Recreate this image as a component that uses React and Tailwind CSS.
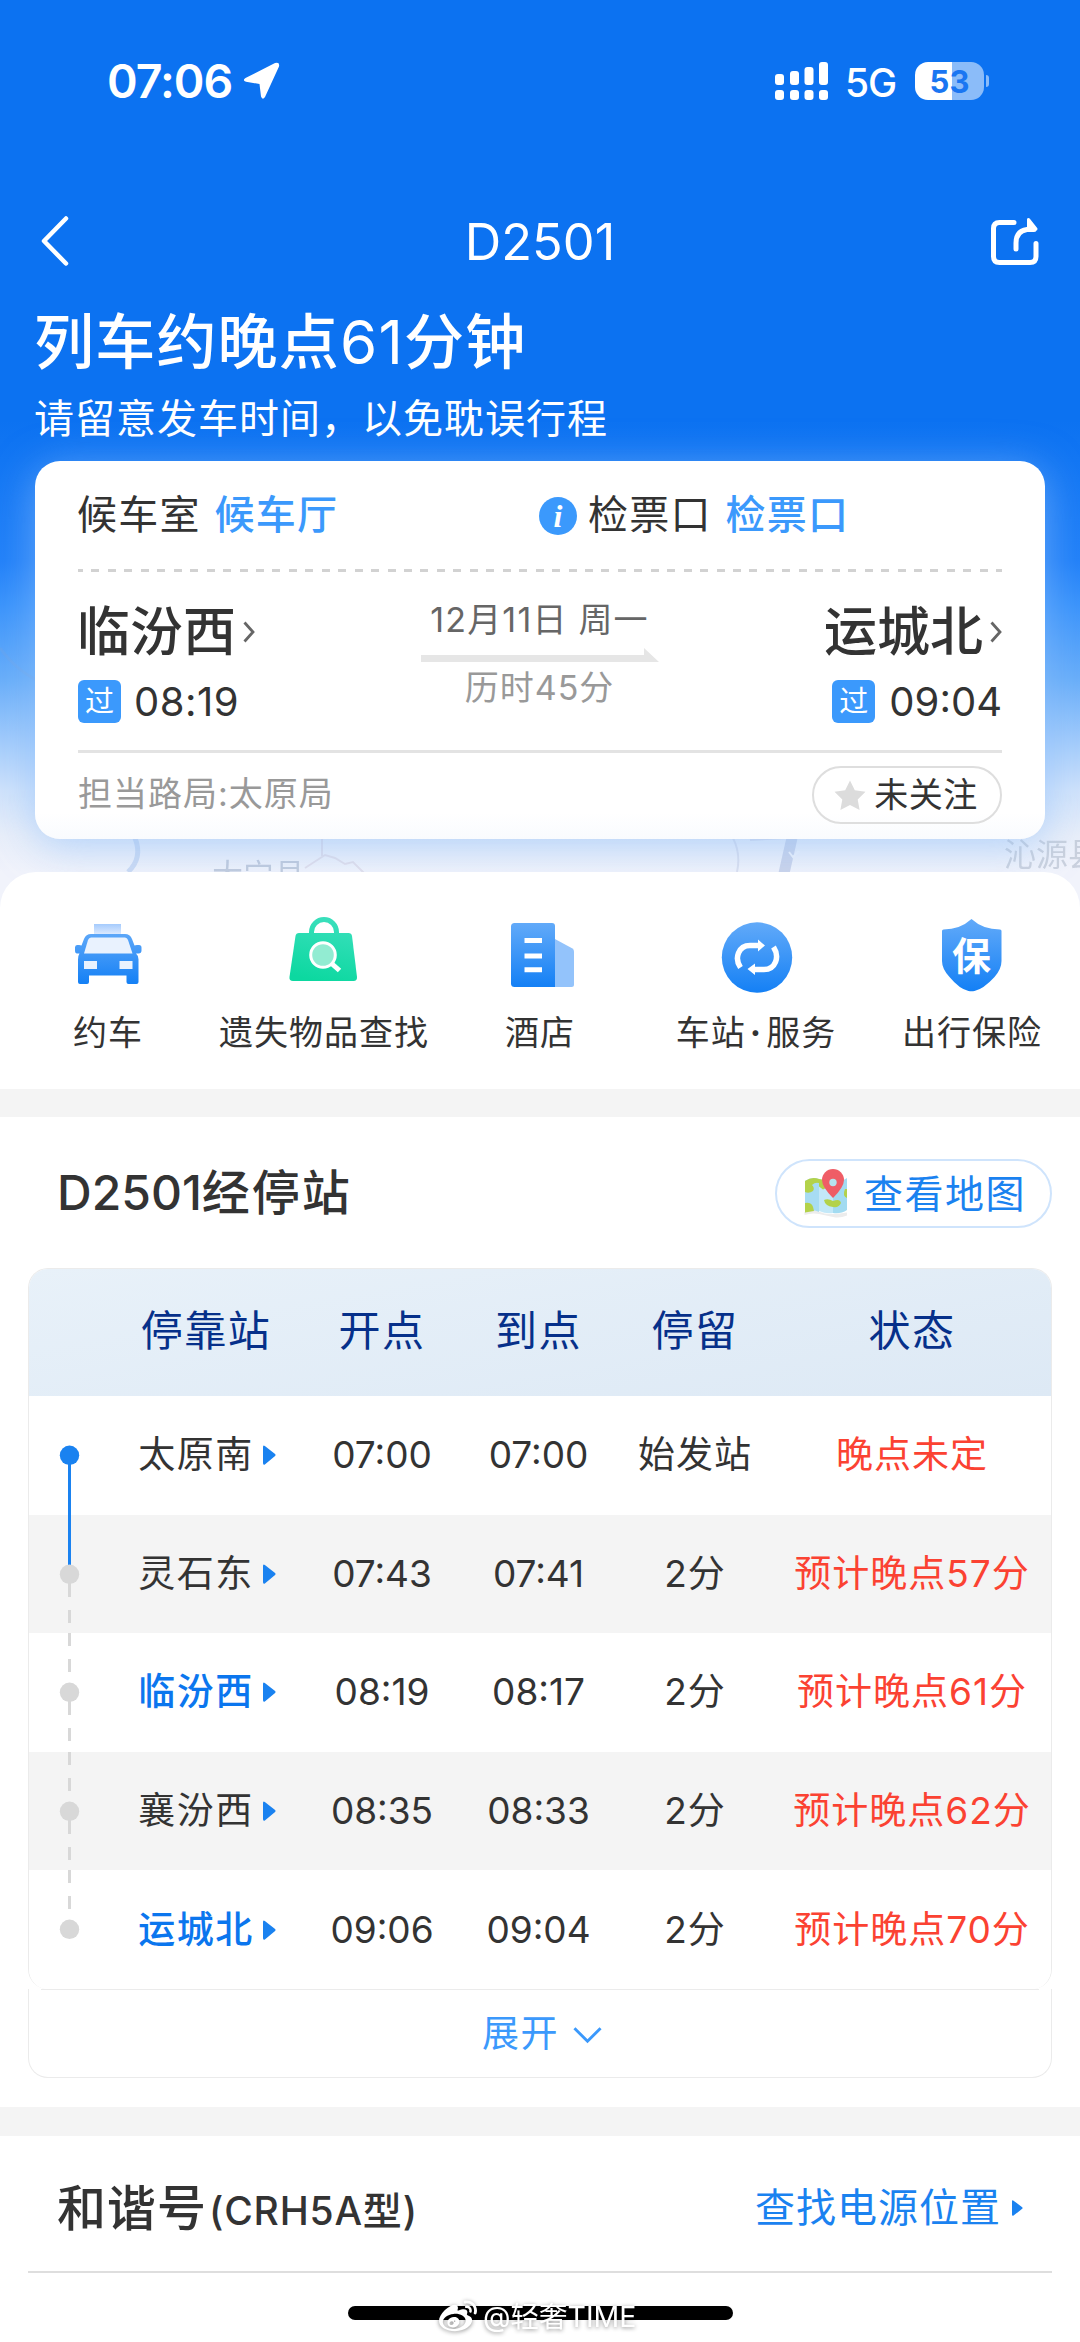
import React from "react";
import { FaWeibo } from "react-icons/fa";

const SERVICES = [
  { label: "约车", icon: CarIcon },
  { label: "遗失物品查找", icon: BagIcon },
  { label: "酒店", icon: HotelIcon },
  { label: "车站·服务", icon: StationIcon },
  { label: "出行保险", icon: ShieldIcon },
];

const STOPS = [
  { name: "太原南", depart: "07:00", arrive: "07:00", stay: "始发站", status: "晚点未定", passed: true },
  { name: "灵石东", depart: "07:43", arrive: "07:41", stay: "2分", status: "预计晚点57分" },
  { name: "临汾西", depart: "08:19", arrive: "08:17", stay: "2分", status: "预计晚点61分", active: true },
  { name: "襄汾西", depart: "08:35", arrive: "08:33", stay: "2分", status: "预计晚点62分" },
  { name: "运城北", depart: "09:06", arrive: "09:04", stay: "2分", status: "预计晚点70分", active: true },
];

function BlueGradient({ id, y1, y2 }) {
  return (
    <linearGradient id={id} gradientUnits="userSpaceOnUse" x1="0" x2="0" y1={y1} y2={y2}>
      <stop offset="0" stopColor="#62aaf9" />
      <stop offset="1" stopColor="#1480f5" />
    </linearGradient>
  );
}

function CarIcon() {
  return (
    <svg viewBox="68 916 80 80" className="size-20">
      <defs>
        <BlueGradient id="car" y1="930" y2="984" />
        <linearGradient id="sign" x1="0" x2="0" y1="0" y2="1">
          <stop offset="0" stopColor="#a5cbfd" />
          <stop offset="1" stopColor="#dbe9fe" />
        </linearGradient>
      </defs>
      <rect x="94" y="924" width="27" height="10" fill="url(#sign)" />
      <path
        d="M91 934h34q5 0 7 5l2.500 6.500q1-.5 2.500-.5h2q2.500 0 2.500 2.500v3q0 3-3 3h-2.500q2.500 2 2.500 6V982q0 2-2 2h-8q-2 0-2-2v-6.500H89V982q0 2-2 2h-7q-2 0-2-2v-22.500q0-4 1.500-6H77q-2 0-2-3v-3q0-2.500 2-2.500h2q1.500 0 2.500.5l2.500-6.500q2-5 7-5z"
        fill="url(#car)"
      />
      <path d="M91 937.500h34q2 0 3 2.500l4.500 13.500h-48.500L88 940q1-2.500 3-2.500z" fill="#e9f2fe" />
      <rect x="84" y="961" width="13" height="8" fill="#e9f2fe" />
      <rect x="119.500" y="961" width="13" height="8" fill="#e9f2fe" />
    </svg>
  );
}

function BagIcon() {
  return (
    <svg viewBox="284 916 80 80" className="size-20">
      <defs>
        <linearGradient id="bag" gradientUnits="userSpaceOnUse" x1="330" x2="316" y1="920" y2="981">
          <stop offset="0" stopColor="#38dfbb" />
          <stop offset="1" stopColor="#0cd8a0" />
        </linearGradient>
      </defs>
      <path d="M311.500 936v-4a12.500 12.500 0 0 1 25 0v4" fill="none" stroke="url(#bag)" strokeWidth="5" />
      <path d="M299 933h49.500q3 0 3.500 3l5 41q.3 4-3.500 4h-60.500q-4 0-3.500-4l6-41q.5-3 3.500-3z" fill="url(#bag)" />
      <path d="M331 963l8.500 7.500" stroke="#fff" strokeWidth="5" />
      <circle cx="323" cy="955" r="12.300" fill="#92ecd2" stroke="#fff" strokeWidth="3" />
    </svg>
  );
}

function HotelIcon() {
  return (
    <svg viewBox="500 916 80 80" className="size-20">
      <defs>
        <BlueGradient id="hotel" y1="923" y2="987" />
      </defs>
      <path d="M554 938.500l18.500 10q1.500 1 1.500 3V984.500q0 2.500-2.500 2.500H554z" fill="#93c3fb" />
      <path d="M514.500 923H552q3 0 3 3v61h-40.500q-3.500 0-3.500-3.500v-57q0-3.500 3.500-3.500z" fill="url(#hotel)" />
      <path d="M524.500 940.500H542M524.500 956H542M524.500 969.800H542" stroke="#fff" strokeWidth="5" />
    </svg>
  );
}

function StationIcon() {
  return (
    <svg viewBox="716 916 80 80" className="size-20">
      <defs>
        <BlueGradient id="station" y1="922" y2="993" />
      </defs>
      <circle cx="757" cy="957.500" r="35.200" fill="url(#station)" />
      <path
        d="M740.500 967.500C734 958 738.500 945.500 750 945.500H759M773.500 947C780 957 775.500 969.500 764 969.500H754"
        fill="none"
        stroke="#fff"
        strokeWidth="5.500"
      />
      <path d="M758 939.500l7 6-7 6zM755 963.500l-7.500 5.500 7.500 6z" fill="#fff" />
    </svg>
  );
}

function ShieldIcon() {
  return (
    <svg viewBox="932 916 80 80" className="size-20">
      <defs>
        <BlueGradient id="shield" y1="919" y2="991" />
      </defs>
      <path
        d="M971.500 919Q983 929.500 1000 929.500q1.500 0 1.500 1.500v30q0 8-7 16-11 12-20 14-3 .6-6 0-9-2-19-14-7.500-8-7.500-16v-30q0-1.500 1.500-1.500Q960 929.500 971.500 919z"
        fill="url(#shield)"
      />
      <text x="971.500" y="970" textAnchor="middle" fill="#fff" className="text-[39px] font-bold">
        保
      </text>
    </svg>
  );
}

function MapIcon() {
  return (
    <svg viewBox="800 1168 52 52" className="size-[52px]">
      <path d="M804.500 1212q7-3.500 14-.5t14 2.500 14.500-1.500v3q-7 3-14 1.500t-14-3-14.500 1z" fill="#ececec" />
      <path d="M805 1181q7-5 14-2v33q-7-3-14 .5z" fill="#a7dcf3" />
      <path d="M819 1179q7 2 14 2v32q-7 1-14-2z" fill="#c3e8f8" />
      <path d="M833 1181q8 1 14-3v32q-6 4-14 3z" fill="#a2dbf1" />
      <path d="M805 1181q7-5 14-2v4q-4-1-7 2 3 3 1 6-4 3-8 1zM819 1179l9 1.500-1 7-4 2-4-3zM805 1203q8-2 9 8l-9 1.500zM824 1200q4-2 9 1 7-3 8 2-2 5-8 4-8-1-9-7zM847 1189v9q-5-2-2-9z" fill="#b3d24a" />
      <path d="M833 1198q-11-11-11-18a11 11 0 0 1 22 0q0 7-11 18z" fill="#ef5d66" />
      <circle cx="833" cy="1182.500" r="3.700" fill="#b6e4ee" />
    </svg>
  );
}

function StatusBar() {
  return (
    <div className="flex h-[162px] items-center justify-between pl-[107px] pr-[91px]">
      <div className="flex items-center gap-[11px]">
        <span className="text-[46.500px] font-semibold tracking-[-1px]">07:06</span>
        <svg viewBox="245 62 38 38" className="size-[38px]">
          <path d="M281 66.500L267 97q-2.500 3.500-4-.5L261.500 84 248 81.800q-4-1.300-.5-3.800L277 63q5-1.500 4 3.500z" fill="#fff" />
        </svg>
      </div>
      <div className="flex items-center">
        <svg viewBox="775 61 54 38" className="h-[38px] w-[54px]" fill="#fff">
          <rect x="775" y="73" width="9" height="11" rx="3" />
          <rect x="790" y="70" width="9" height="14" rx="3" />
          <rect x="804.500" y="66" width="9" height="18" rx="3" />
          <rect x="819" y="61" width="9" height="23" rx="3" />
          <rect x="775" y="89" width="9" height="10" rx="3" />
          <rect x="790" y="89" width="9" height="10" rx="3" />
          <rect x="804.500" y="89" width="9" height="10" rx="3" />
          <rect x="819" y="89" width="9" height="10" rx="3" />
        </svg>
        <span className="ml-[16px] w-[70px] pt-[2px] text-[39px] font-medium tracking-[-1px]">5G</span>
        <div className="flex h-[38px] w-[69px] items-center justify-center rounded-[13px] bg-[linear-gradient(90deg,#fff_53%,#8bbcf9_53%)] text-[31px] font-bold text-[#1a76f2]">
          53
        </div>
        <div className="ml-[2px] h-3 w-[3px] rounded-r-full bg-[#8bbcf9]" />
      </div>
    </div>
  );
}

function NavBar() {
  return (
    <div className="flex h-[158px] items-center justify-between px-[40px]">
      <svg viewBox="0 0 50 52" className="h-[52px] w-[50px]" fill="none" stroke="#fff" strokeWidth="4.500" strokeLinecap="round" strokeLinejoin="round">
        <path d="M26 3.500L4 26 26 48.500" />
      </svg>
      <span className="pt-[3px] text-[50.500px]">D2501</span>
      <svg viewBox="990 216 50 50" className="size-[50px]" fill="none" stroke="#fff" strokeWidth="5" strokeLinecap="round" strokeLinejoin="round">
        <path d="M1014 222.500H999.500q-6 0-6 6v28q0 6 6 6h30.500q6 0 6-6v-13" />
        <path d="M1016 249v-6q0-12 11-13.500h7" />
        <path d="M1028.500 219.500v9.500h7.500z" fill="#fff" strokeWidth="3" />
      </svg>
    </div>
  );
}

function PassBadge() {
  return (
    <span className="flex h-[43px] w-[43px] items-center justify-center rounded-[6px] bg-[#3b99fc] text-[29px] tracking-normal text-white">
      过
    </span>
  );
}

function Chevron() {
  return (
    <svg viewBox="0 0 12 24" className="h-6 w-3" fill="none" stroke="#666" strokeWidth="2.800">
      <path d="M1.500 2.500L10 12 1.500 21.500" />
    </svg>
  );
}

function TripCard() {
  return (
    <div className="relative mx-[35px] mt-[21px] h-[378px] rounded-[25px] bg-[linear-gradient(180deg,#fff_93%,#f9fbfe_100%)] px-[43px] text-[#333] shadow-[0_7px_42px_rgba(142,190,250,0.62)]">
      <div className="-ml-[1px] flex h-[108px] items-center pb-[1px] text-[40px] tracking-[1.200px]">
        <div className="flex w-[462px] gap-[14px]">
          <span>候车室</span>
          <span className="font-medium text-[#3b99fc]">候车厅</span>
        </div>
        <span className="mt-[2px] flex size-[38px] items-center justify-center rounded-full bg-[#3b99fc] font-['Liberation_Serif'] text-[32px] font-bold italic tracking-normal text-white">
          i
        </span>
        <span className="ml-[11px]">检票口</span>
        <span className="ml-[14px] font-medium text-[#3b99fc]">检票口</span>
      </div>
      <div className="h-[3px] bg-[repeating-linear-gradient(90deg,#d2d2d2_0_5px,transparent_5px_13.450px,#d2d2d2_13.450px_16.450px)]" />
      <div className="flex h-[178px] justify-between pt-[25px]">
        <div>
          <div className="-ml-[1px] flex h-[70px] items-center gap-[7px]">
            <span className="text-[53px] font-medium">临汾西</span>
            <Chevron />
          </div>
          <div className="flex h-[70px] items-center gap-[13px] pb-[1px] text-[40px] tracking-[0.500px]">
            <PassBadge />
            08:19
          </div>
        </div>
        <div className="flex w-[238px] flex-col items-center">
          <span className="h-[48px] whitespace-nowrap text-[34px] leading-[46px] tracking-[1.200px] text-[#666]">12月11日 周一</span>
          <svg viewBox="0 0 238 18" className="h-[18px] w-[238px]">
            <path d="M0 10h223V3l15 14H0z" fill="#e6e6e6" />
          </svg>
          <span className="mt-[2px] text-[34px] leading-[46px] tracking-[1px] text-[#999]">历时45分</span>
        </div>
        <div>
          <div className="flex h-[70px] items-center justify-end gap-[7px]">
            <span className="text-[53px] font-medium">运城北</span>
            <Chevron />
          </div>
          <div className="flex h-[70px] items-center justify-end gap-[14px] pb-[1px] text-[40px]">
            <PassBadge />
            09:04
          </div>
        </div>
      </div>
      <div className="h-[3px] bg-[#e3e3e3]" />
      <div className="flex h-[82px] items-center justify-between text-[34px]">
        <span className="tracking-[1px] text-[#999]">担当路局:太原局</span>
        <span className="mt-[2px] flex h-[58px] w-[190px] items-center justify-center gap-[8px] rounded-full border-2 border-[#dedede] pr-[2px] tracking-[0.500px]">
          <svg viewBox="0 0 32 30" className="h-[31px] w-8" fill="#dcdcdc">
            <path d="M16 0l4.800 9.800L31.500 11.300 23.700 18.900 25.600 29.600 16 24.600 6.400 29.600 8.300 18.900.5 11.300 11.200 9.800z" />
          </svg>
          未关注
        </span>
      </div>
    </div>
  );
}

function MapBackdrop() {
  return (
    <svg viewBox="0 0 1080 908" className="absolute left-0 top-0 h-[908px] w-[1080px] opacity-60" fill="none">
      <path d="M0 648q14 20 36 32" stroke="#7aa3dc" strokeOpacity=".4" strokeWidth="3" />
      <path d="M135 838q8 20-7 34" stroke="#b5cbee" strokeWidth="5" />
      <path d="M305 868l20-13 10 3 10 6 8-2 12 12M322 838v18" stroke="#d9d2e0" strokeWidth="2" />
      <path d="M792 838l-10 44" stroke="#b3c0e0" strokeWidth="11" />
      <path d="M789 852l4 5 6-6" stroke="#f3f6fc" strokeWidth="2" />
      <path d="M733 838q8 16 4 34M750 840l36-2" stroke="#cdd2e6" strokeWidth="2" />
      <text x="212" y="886" fill="#a3b1c8" className="text-[31px]">大宁县</text>
      <text x="1004" y="866" fill="#b3bccb" className="text-[32px]">沁源县</text>
    </svg>
  );
}

function TrackDots({ index, count, passed }) {
  const line = "#d8d8d8";
  return (
    <svg viewBox="0 0 82 118.600" className="h-[118.600px] w-[82px]">
      {index === 1 && <path d="M40.500 0v52" stroke="#1a82f0" strokeWidth="3" />}
      {index > 1 && <path d="M40.500 0v13M40.500 26v13" stroke={line} strokeWidth="3" />}
      {passed && <path d="M40.500 59v60" stroke="#1a82f0" strokeWidth="3" />}
      {!passed && index < count - 1 && <path d="M40.500 59v23M40.500 95v13" stroke={line} strokeWidth="3" />}
      <circle cx="40.500" cy="59.300" r="9.700" fill={passed ? "#1a82f0" : line} />
    </svg>
  );
}

function PlayMark({ className }) {
  return (
    <svg viewBox="0 0 14 20" className={className} fill="#1a82f0" preserveAspectRatio="none">
      <path d="M0 2q0-2.500 2-1L13 9q1 1 0 2L2 19.500Q0 20.500 0 18z" />
    </svg>
  );
}

function StopTable() {
  const columns = "grid grid-cols-[81px_194px_156px_157px_156px_1fr] items-center justify-items-center";
  return (
    <div className="mx-[28px]">
      <div className="overflow-hidden rounded-[20px] border-x border-t border-[#ebebeb]">
        <div className={`${columns} h-[127px] bg-[linear-gradient(170deg,#e8f1f9,#dde9f5)] pb-[3px] text-[42px] tracking-[1.500px] text-[#06308a]`}>
          <span />
          <span className="-ml-[2px]">停靠站</span>
          <span>开点</span>
          <span>到点</span>
          <span>停留</span>
          <span>状态</span>
        </div>
        {STOPS.map((s, i) => (
          <div key={s.name} className={`${columns} h-[118.600px] text-[37px] text-[#333] ${i % 2 ? "bg-[#f4f4f4]" : "bg-white"}`}>
            <TrackDots index={i} count={STOPS.length} passed={s.passed} />
            <span className="flex items-center gap-[9px] pb-[1px] tracking-[1.500px]">
              <span className={s.active ? "font-medium text-[#0b76ee]" : ""}>{s.name}</span>
              <PlayMark className="mt-[1px] h-5 w-[13px]" />
            </span>
            <span className="pb-[1px]">{s.depart}</span>
            <span className="pb-[1px]">{s.arrive}</span>
            <span className="pb-[1px] tracking-[1px]">{s.stay}</span>
            <span className="pb-[1px] tracking-[1px] text-[#fb4232]">{s.status}</span>
          </div>
        ))}
      </div>
      <div className="rounded-b-[20px] border-x border-b border-[#ebebeb]">
        <div className="mx-[12px] h-px bg-[#ebebeb]" />
        <div className="flex h-[87px] items-center justify-center gap-[14px] pl-[4px] text-[37px] tracking-[1.500px] text-[#3b99fc]">
          展开
          <svg viewBox="0 0 30 18" className="mt-[3px] h-[18px] w-[29px]" fill="none" stroke="#3b99fc" strokeWidth="3">
            <path d="M1.500 2L15 15.500 28.500 2" />
          </svg>
        </div>
      </div>
    </div>
  );
}

export default function App() {
  return (
    <div className="flex h-[2342px] w-[1080px] flex-col overflow-hidden bg-white font-['Inter','Noto_Sans_CJK_SC',sans-serif] leading-none" lang="zh-CN">
      <header className="relative h-[908px] shrink-0 bg-[linear-gradient(180deg,#0c72f1_0,#0c72f1_420px,#2180f8_560px,#3a93fb_605px,#69aef9_680px,#9cc8fb_735px,#cfe2fb_790px,#e8eef9_835px,#f1f3fb_872px)] text-white">
        <MapBackdrop />
        <StatusBar />
        <NavBar />
        <h1 className="pl-[34px] text-[60px] font-medium leading-[44px] tracking-[1.200px]">
          列车约晚点<span className="font-normal">61</span>分钟
        </h1>
        <p className="mt-[34px] pl-[34px] text-[40px] leading-[42px] tracking-[1px]">请留意发车时间，以免耽误行程</p>
        <TripCard />
      </header>

      <section className="relative -mt-[36px] grid h-[217px] shrink-0 grid-cols-5 rounded-t-[36px] bg-white pt-[44px]">
        {SERVICES.map(({ label, icon: Icon }) => (
          <div key={label} className="flex flex-col items-center gap-[19px]">
            <Icon />
            <span className="whitespace-nowrap text-[34px] leading-[36px] tracking-[1px] text-[#333]">
              {label.split("·").map((part, i) => (
                <React.Fragment key={part}>
                  {i > 0 && <span className="mx-[4px] font-bold">·</span>}
                  {part}
                </React.Fragment>
              ))}
            </span>
          </div>
        ))}
      </section>
      <div className="h-[28px] shrink-0 bg-[#f4f4f4]" />

      <section className="shrink-0">
        <div className="flex h-[151px] items-center justify-between pl-[57px] pr-[28px]">
          <h2 className="text-[48px] font-medium text-[#333]">
            D2501<span className="tracking-[2px]">经停站</span>
          </h2>
          <span className="mt-[2px] flex h-[69px] w-[277px] items-center gap-[12px] rounded-full border-2 border-[#cfe4fc] pl-[23px] text-[39px] tracking-[1.500px] text-[#1a82f0]">
            <MapIcon />
            查看地图
          </span>
        </div>
        <StopTable />
      </section>
      <div className="mt-[29px] h-[29px] shrink-0 bg-[#f4f4f4]" />

      <section className="mx-[28px] flex h-[137px] shrink-0 items-center justify-between border-b-2 border-[#dedede] pl-[29px] pr-[29px] pt-[10px] text-[#333]">
        <h2 className="flex items-center text-[49px] font-medium tracking-[1px]">
          和谐号<span className="ml-[2px] mt-[4px] text-[39px] tracking-[0.800px]">(CRH5A型)</span>
        </h2>
        <span className="flex items-center gap-[11px] text-[40px] tracking-[1px] text-[#1a82f0]">
          查找电源位置
          <PlayMark className="h-4 w-[11px]" />
        </span>
      </section>

      <footer className="relative flex grow justify-center pt-[33px]">
        <div className="h-[14px] w-[385px] rounded-full bg-black" />
        <div className="absolute left-[439px] top-[25px] flex items-center gap-[6px] text-[28.500px] text-white [filter:drop-shadow(0_1px_2px_rgba(0,0,0,0.45))]">
          <FaWeibo className="size-[38px]" />
          <span className="whitespace-nowrap">@轻奢TIME</span>
        </div>
      </footer>
    </div>
  );
}
